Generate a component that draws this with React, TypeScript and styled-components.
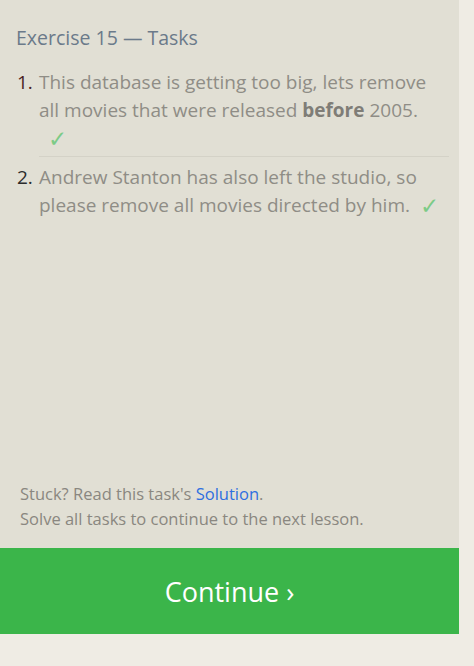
import React from "react";
import styled, { createGlobalStyle } from "styled-components";

const Global = createGlobalStyle`
  html, body { margin: 0; padding: 0; background: #efece4; }
  body { font-family: "Open Sans", "Noto Sans", sans-serif; }
`;

const Panel = styled.div`
  width: 459px;
  display: flex;
  flex-direction: column;
`;

const Body = styled.div`
  height: 548px;
  box-sizing: border-box;
  background: #e1dfd4;
  display: flex;
  flex-direction: column;
  padding: 24px 10px 17px 16px;
`;

const Title = styled.h2`
  margin: 0 0 16px;
  font-size: 19.5px;
  font-weight: 400;
  line-height: 28px;
  color: #6b7a8a;
`;

const List = styled.ol`
  margin: 0;
  padding: 0 0 0 23px;
  list-style: none;
  flex: 1;
`;

const Item = styled.li<{ $last?: boolean }>`
  position: relative;
  font-size: 19px;
  line-height: 28px;
  color: #8f8d86;
  padding-bottom: ${(p) => (p.$last ? "0" : "4px")};
  margin-bottom: ${(p) => (p.$last ? "0" : "6px")};
  border-bottom: ${(p) => (p.$last ? "none" : "1px solid #d4d2c7")};
  b { color: #7f7d77; font-weight: 700; }
`;

const Num = styled.span<{ $c: string }>`
  position: absolute;
  left: -22px;
  top: 0;
  color: ${(p) => p.$c};
`;

const Check = styled.span<{ $pad: number }>`
  display: inline-block;
  font-size: 23px;
  line-height: 28px;
  vertical-align: top;
  color: #7ccb87;
  padding-left: ${(p) => p.$pad}px;
`;

const Footer = styled.div`
  padding-left: 4px;
  font-size: 16.5px;
  line-height: 25px;
  color: #8a8780;
`;

const Link = styled.a`
  color: #2f6fe0;
  text-decoration: none;
`;

const Button = styled.button`
  height: 86px;
  border: 0;
  background: #3bb54a;
  color: #ffffff;
  font-family: "Open Sans", "Noto Sans", sans-serif;
  font-size: 27px;
  padding: 0;
  cursor: pointer;
`;

export default function App() {
  return (
    <>
      <Global />
      <Panel>
        <Body>
          <Title>Exercise 15 — Tasks</Title>
          <List>
            <Item>
              <Num $c="#4a1e1e">1.</Num>
              This database is getting too big, lets remove all movies that were released <b>before</b> 2005.
              <br />
              <Check $pad={9}>✓</Check>
            </Item>
            <Item $last>
              <Num $c="#2c2c2c">2.</Num>
              Andrew Stanton has also left the studio, so please remove all movies directed by him.
              <Check $pad={10}>✓</Check>
            </Item>
          </List>
          <Footer>
            Stuck? Read this task's <Link href="#">Solution</Link>.
            <br />
            Solve all tasks to continue to the next lesson.
          </Footer>
        </Body>
        <Button>Continue ›</Button>
      </Panel>
    </>
  );
}
